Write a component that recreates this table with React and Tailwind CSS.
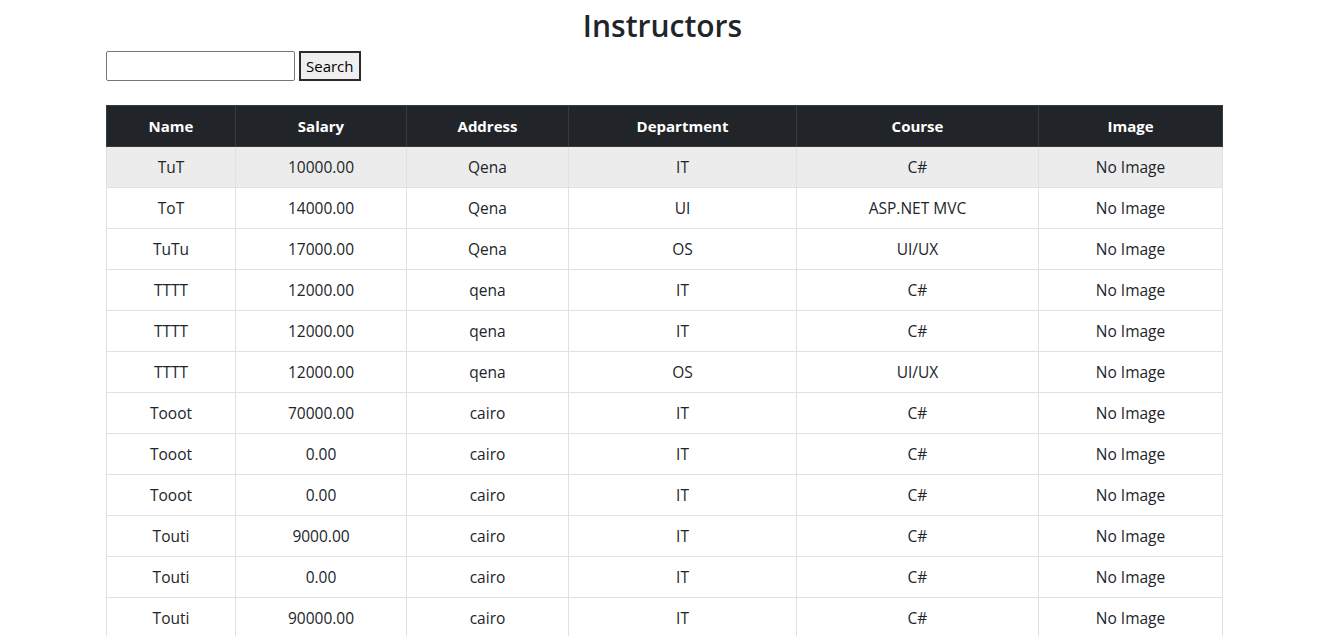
const rows = [
  ["TuT", "10000.00", "Qena", "IT", "C#"],
  ["ToT", "14000.00", "Qena", "UI", "ASP.NET MVC"],
  ["TuTu", "17000.00", "Qena", "OS", "UI/UX"],
  ["TTTT", "12000.00", "qena", "IT", "C#"],
  ["TTTT", "12000.00", "qena", "IT", "C#"],
  ["TTTT", "12000.00", "qena", "OS", "UI/UX"],
  ["Tooot", "70000.00", "cairo", "IT", "C#"],
  ["Tooot", "0.00", "cairo", "IT", "C#"],
  ["Tooot", "0.00", "cairo", "IT", "C#"],
  ["Touti", "9000.00", "cairo", "IT", "C#"],
  ["Touti", "0.00", "cairo", "IT", "C#"],
  ["Touti", "90000.00", "cairo", "IT", "C#"],
];

const widths = ["w-[129px]", "w-[171px]", "w-[162px]", "w-[228px]", "w-[242px]", "w-[184px]"];
const heads = ["Name", "Salary", "Address", "Department", "Course", "Image"];

export default function App() {
  return (
    <div className="min-h-screen bg-white text-[#212529] font-['Open_Sans',sans-serif]">
      <h2 className="pt-[7px] text-center text-[30px] leading-[38px] font-semibold">Instructors</h2>

      <form className="ml-[106px] mt-[6px] flex items-center gap-[4px]" onSubmit={(e) => e.preventDefault()}>
        <input className="w-[189px] h-[30px] rounded-[2px] border border-[#767676] px-1 text-[15px]" />
        <button className="h-[30px] px-[5px] border-2 border-[#2b2b2b] bg-[#efefef] text-[15px] text-black">
          Search
        </button>
      </form>

      <table className="ml-[106px] mt-[24px] w-[1116px] table-fixed border-collapse text-[15.5px]">
        <thead>
          <tr className="bg-[#212529] text-white">
            {heads.map((h, i) => (
              <th key={h} className={`${widths[i]} h-[41px] border border-[#373b3e] text-[15px] font-bold text-center`}>
                {h}
              </th>
            ))}
          </tr>
        </thead>
        <tbody>
          {rows.map((r, i) => (
            <tr key={i} className={i === 0 ? "bg-[#ececec]" : "bg-white"}>
              {[...r, "No Image"].map((c, j) => (
                <td key={j} className="h-[41px] pt-[2px] border border-[#dee2e6] text-center">
                  {c}
                </td>
              ))}
            </tr>
          ))}
        </tbody>
      </table>
    </div>
  );
}
